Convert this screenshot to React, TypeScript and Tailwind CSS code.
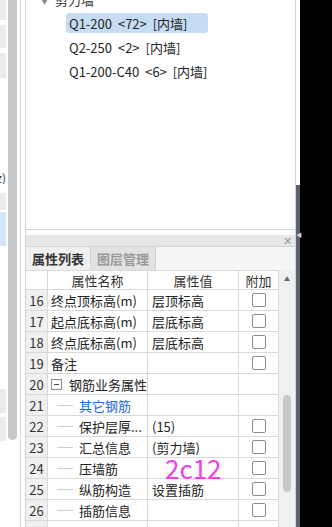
import React from 'react';

type Row = {
  no: number;
  name: string;
  value?: string;
  check?: boolean;
  child?: boolean;
  group?: boolean;
  blue?: boolean;
  mark?: string;
};

const rows: Row[] = [
  { no: 16, name: '终点顶标高(m)', value: '层顶标高', check: true },
  { no: 17, name: '起点底标高(m)', value: '层底标高', check: true },
  { no: 18, name: '终点底标高(m)', value: '层底标高', check: true },
  { no: 19, name: '备注', check: true },
  { no: 20, name: '钢筋业务属性', group: true },
  { no: 21, name: '其它钢筋', child: true, blue: true },
  { no: 22, name: '保护层厚...', value: '(15)', child: true, check: true },
  { no: 23, name: '汇总信息', value: '(剪力墙)', child: true, check: true },
  { no: 24, name: '压墙筋', child: true, check: true, mark: '2c12' },
  { no: 25, name: '纵筋构造', value: '设置插筋', child: true, check: true },
  { no: 26, name: '插筋信息', child: true, check: true },
];

const treeItems = ['Q1-200 <72> [内墙]', 'Q2-250 <2> [内墙]', 'Q1-200-C40 <6> [内墙]'];

const Checkbox = () => (
  <div className="w-[14px] h-[14px] rounded-[2px] border border-[#8c8c8c] bg-white" />
);

const LeftStrip = () => (
  <div className="w-[8px] flex flex-col shrink-0">
    <div className="w-[6px] h-[20px] shrink-0 bg-[#ebebeb]" />
    <div className="w-[6px] h-[23px] shrink-0 mt-[5px] bg-[#ebebeb]" />
    <div className="w-[6px] h-[25px] shrink-0 mt-[5px] bg-[#ebebeb]" />
    <div className="w-[6px] h-[12px] shrink-0 mt-[94px] overflow-hidden flex justify-end text-[12px] leading-[12px] text-[#333]">
      <span className="whitespace-nowrap">z)</span>
    </div>
    <div className="w-[6px] h-[17px] shrink-0 mt-[9px] bg-[#ebebeb]" />
    <div className="w-[6px] h-[34px] shrink-0 mt-[2px] bg-[#d5e6fb]" />
    <div className="w-[6px] h-[24px] shrink-0 mt-[143px] bg-[#ebebeb]" />
    <div className="w-[6px] h-[24px] shrink-0 mt-[4px] bg-[#ebebeb]" />
  </div>
);

const TreePanel = () => (
  <div className="h-[230px] shrink-0 border-b border-[#d4d4d4] bg-white">
    <div className="flex items-center h-[12px] -mt-[7px] text-[13px] leading-none text-[#333]">
      <span className="ml-[15px] mt-[4px] text-[7px] text-[#888]">▼</span>
      <span className="ml-[7px]">剪力墙</span>
    </div>
    <div className="flex flex-col mt-[8px] ml-[40px] text-[13px] leading-none text-[#222] [word-spacing:3px]">
      {treeItems.map((t, i) => (
        <div
          key={t}
          className={
            'h-[20px] shrink-0 flex items-center pl-[3px] mb-[4px] whitespace-pre ' +
            (i === 0 ? 'w-[142px] bg-[#c5dcf3] rounded-[3px]' : '')
          }
        >
          {t}
        </div>
      ))}
    </div>
  </div>
);

const PropRow = ({ r }: { r: Row }) => (
  <div className="flex h-[21px] shrink-0 text-[13px] leading-none text-[#222]">
    <div className="w-[22px] shrink-0 border-r border-b border-[#d9d9d9] bg-[#f0f0f0] flex items-center justify-center text-[#333]">
      {r.no}
    </div>
    <div className="w-[100px] shrink-0 border-r border-b border-[#d9d9d9] flex items-center whitespace-nowrap overflow-hidden">
      {r.group ? (
        <>
          <div className="ml-[3px] w-[11px] h-[11px] border border-[#8c8c8c] flex items-center justify-center">
            <div className="w-[5px] h-px bg-[#444]" />
          </div>
          <span className="ml-[7px]">{r.name}</span>
        </>
      ) : r.child ? (
        <>
          <div className="ml-[9px] w-[16px] h-px bg-[#cfcfcf]" />
          <span className={'ml-[6px] ' + (r.blue ? 'text-[#2166e3]' : '')}>{r.name}</span>
        </>
      ) : (
        <span className="ml-[3px]">{r.name}</span>
      )}
    </div>
    <div className="w-[91px] shrink-0 border-r border-b border-[#d9d9d9] flex items-center whitespace-nowrap">
      {r.mark ? (
        <span className="ml-[17px] text-[26px] leading-none text-[#f23cf0] -mt-[1px]">{r.mark}</span>
      ) : (
        <span className="ml-[4px]">{r.value}</span>
      )}
    </div>
    <div className="w-[40px] shrink-0 border-r border-b border-[#d9d9d9] flex items-center justify-center">
      {r.check && <Checkbox />}
    </div>
  </div>
);

const PropPanel = () => (
  <div className="flex flex-col flex-1 min-h-0">
    <div className="h-[5px] shrink-0 bg-white" />
    <div className="h-[12px] shrink-0 bg-[#e6e6e6] border-b border-[#d4d4d4] flex items-center justify-end pr-[3px]">
      <span className="text-[11px] leading-none text-[#999]">✕</span>
    </div>
    <div className="h-[23px] shrink-0 bg-[#f5f5f5] flex text-[13px] leading-none font-bold">
      <div className="w-[65px] bg-[#f0f0f0] border-r border-[#d4d4d4] flex items-center justify-center text-[#333]">
        属性列表
      </div>
      <div className="w-[65px] bg-[#e2e2e2] border-r border-[#d4d4d4] flex items-center justify-center text-[#9a9a9a]">
        图层管理
      </div>
    </div>
    <div className="flex flex-1 min-h-0 overflow-hidden">
      <div className="w-[253px] shrink-0 flex flex-col">
        <div className="flex h-[20px] shrink-0 text-[13px] leading-none text-[#333] border-t border-[#d9d9d9]">
          <div className="w-[22px] border-r border-b border-[#d9d9d9] bg-white" />
          <div className="w-[100px] border-r border-b border-[#d9d9d9] flex items-center justify-center">
            属性名称
          </div>
          <div className="w-[91px] border-r border-b border-[#d9d9d9] flex items-center justify-center">
            属性值
          </div>
          <div className="w-[40px] border-r border-b border-[#d9d9d9] flex items-center justify-center">
            附加
          </div>
        </div>
        {rows.map(r => (
          <PropRow key={r.no} r={r} />
        ))}
        <div className="flex h-[21px] shrink-0">
          <div className="w-[22px] border-r border-[#d9d9d9] bg-[#f0f0f0]" />
          <div className="w-[100px] border-r border-[#d9d9d9]" />
          <div className="w-[91px] border-r border-[#d9d9d9]" />
          <div className="w-[40px] border-r border-[#d9d9d9]" />
        </div>
      </div>
      <div className="w-[16px] shrink-0 bg-[#f0f0f0] flex flex-col items-center">
        <span className="mt-[6px] text-[6px] leading-none text-[#666]">▲</span>
        <div className="mt-[113px] w-[8px] h-[97px] shrink-0 rounded-full bg-[#c8c8c8]" />
      </div>
    </div>
  </div>
);

export default function App() {
  return (
    <div className="w-[332px] h-[527px] flex bg-white overflow-hidden font-['Noto_Sans_CJK_SC','Noto_Sans',sans-serif]">
      <LeftStrip />
      <div className="w-[9px] shrink-0 flex flex-col">
        <div className="h-[440px] shrink-0 bg-[#c8c8c8] rounded-b-[5px]" />
      </div>
      <div className="w-[3px] shrink-0" />
      <div className="w-px shrink-0 bg-[#d8d8d8]" />
      <div className="w-[4px] shrink-0" />
      <div className="w-[271px] shrink-0 flex flex-col border-x border-[#d4d4d4]">
        <TreePanel />
        <PropPanel />
      </div>
      <div className="w-[4px] shrink-0 flex flex-col">
        <div className="h-[185px] shrink-0 bg-white" />
        <div className="flex-1 bg-[#5b6370] relative">
          <span className="absolute left-[0px] top-[47px] text-[6px] leading-none text-[#cfd3d9]">◀</span>
        </div>
      </div>
      <div className="flex-1 bg-black" />
    </div>
  );
}
